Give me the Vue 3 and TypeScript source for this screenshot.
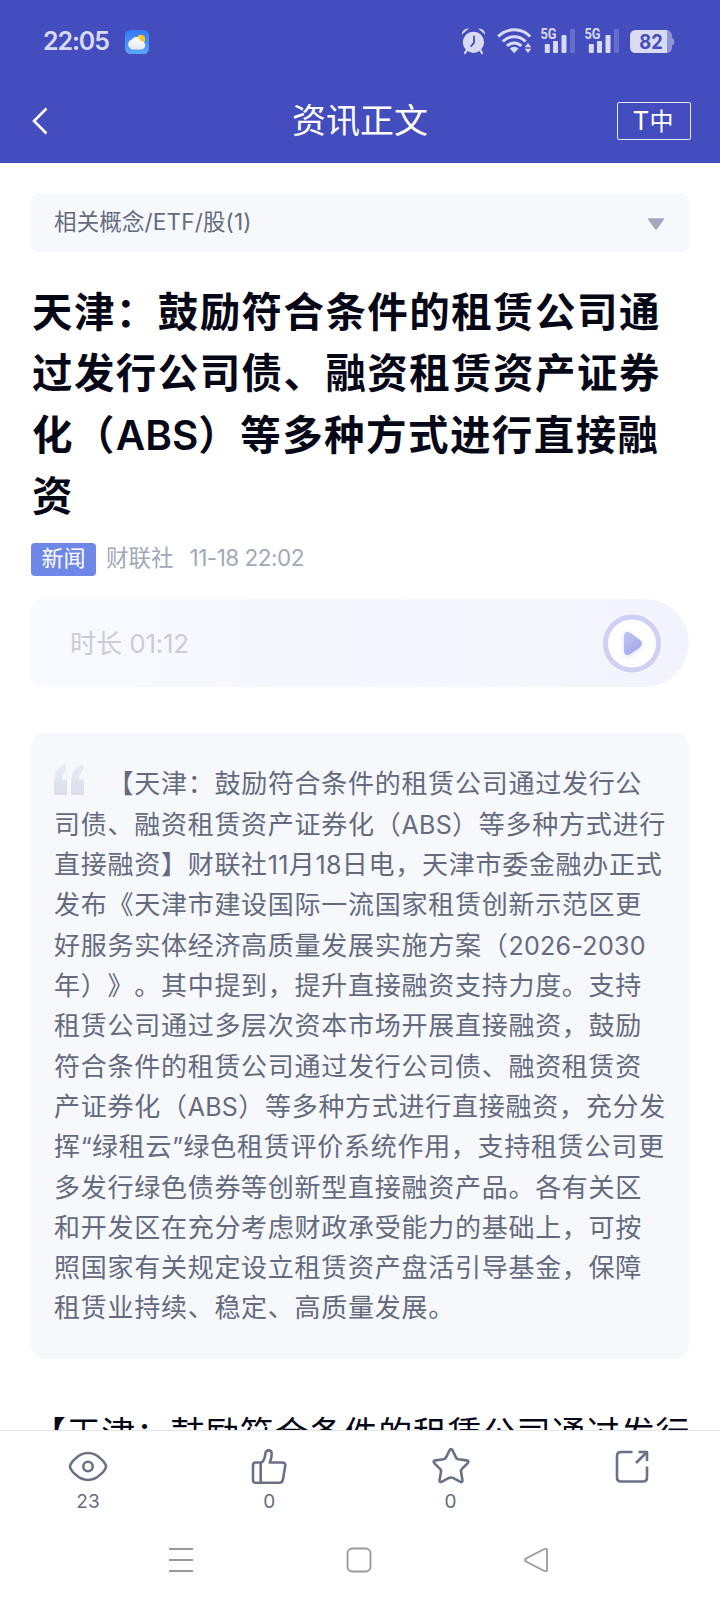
<script setup lang="ts">
interface Segment {
  text: string
  latin: boolean
}

const headline: string[] = [
  '天津：鼓励符合条件的租赁公司通',
  '过发行公司债、融资租赁资产证券',
  '化（ABS）等多种方式进行直接融',
  '资',
]

const summary: string[] = [
  '【天津：鼓励符合条件的租赁公司通过发行公',
  '司债、融资租赁资产证券化（ABS）等多种方式进行',
  '直接融资】财联社11月18日电，天津市委金融办正式',
  '发布《天津市建设国际一流国家租赁创新示范区更',
  '好服务实体经济高质量发展实施方案（2026-2030',
  '年）》。其中提到，提升直接融资支持力度。支持',
  '租赁公司通过多层次资本市场开展直接融资，鼓励',
  '符合条件的租赁公司通过发行公司债、融资租赁资',
  '产证券化（ABS）等多种方式进行直接融资，充分发',
  '挥“绿租云”绿色租赁评价系统作用，支持租赁公司更',
  '多发行绿色债券等创新型直接融资产品。各有关区',
  '和开发区在充分考虑财政承受能力的基础上，可按',
  '照国家有关规定设立租赁资产盘活引导基金，保障',
  '租赁业持续、稳定、高质量发展。',
]

const body = '【天津：鼓励符合条件的租赁公司通过发行'

function segments(line: string): Segment[] {
  return line
    .split(/([A-Za-z0-9\-“”]+)/)
    .filter((t) => t.length > 0)
    .map((t) => ({ text: t, latin: /^[A-Za-z0-9\-“”]/.test(t) }))
}
</script>

<template>
  <div class="screen">
    <header class="top">
      <div class="status">
        <span class="clock">22:05</span>
        <svg class="weather" width="24" height="24" viewBox="0 0 24 24">
          <defs>
            <linearGradient id="sky" x1="0" y1="0" x2="0" y2="1">
              <stop offset="0" stop-color="#3478f3" />
              <stop offset="1" stop-color="#5ba6f8" />
            </linearGradient>
            <linearGradient id="cloud" x1="0" y1="0" x2="0" y2="1">
              <stop offset="0" stop-color="#fff" />
              <stop offset="1" stop-color="#e4e9f0" />
            </linearGradient>
          </defs>
          <rect width="24" height="24" rx="5.5" fill="url(#sky)" />
          <circle cx="15.8" cy="9.2" r="4.4" fill="#fcc62c" />
          <path d="M7.800 19.500a5 5 0 0 1-4.600-5.200c0-2.400 1.600-4.200 3.600-4.600C7.600 8 9 7 10.800 7c2.300 0 4.100 1.600 4.500 3.700 3 .1 4.900 1.900 4.900 4.500 0 2.500-1.900 4.300-4.400 4.300z" fill="url(#cloud)" />
        </svg>
        <div class="signals">
          <svg width="214" height="28" viewBox="0 0 214 28" fill="#d9dbf5">
            <!-- alarm clock -->
            <g>
              <circle cx="12.500" cy="15.300" r="10.600" />
              <path d="M.8 7.800a6 6 0 0 1 7-6.300zM24.200 7.800a6 6 0 0 0-7-6.300z" />
              <path d="M5.500 23.500l-1.500 2.500M19.500 23.500l1.500 2.500" stroke="#d9dbf5" stroke-width="2.200" stroke-linecap="round" />
              <path d="M13 9.500v6.300l-2.800 3.200" fill="none" stroke="#444dbe" stroke-width="1.800" stroke-linecap="round" />
            </g>
            <!-- wifi -->
            <g fill="none" stroke="#d9dbf5" stroke-width="3">
              <path d="M37.200 9.500a22.500 22.500 0 0 1 32 0" />
              <path d="M41.800 14.500a16 16 0 0 1 22.800 0" />
              <path d="M46 19a10 10 0 0 1 14.400 0" />
            </g>
            <path d="M53.200 26.200l-4.400-4.600a6.400 6.400 0 0 1 8.800 0z" />
            <path d="M67 16l3.400 4.200h-6.800zM67 26l3.400-4.200h-6.800z" />
            <!-- cell signals -->
            <g v-for="x in [79, 123]" :key="x">
              <rect :x="x + 4.800" y="17" width="5" height="9" rx="1" />
              <rect :x="x + 13" y="14" width="5" height="12" rx="1" />
              <rect :x="x + 21.500" y="8" width="5" height="18" rx="1" />
              <rect :x="x + 30" y="2" width="5" height="24" rx="1" opacity=".23" />
            </g>
            <!-- battery -->
            <path d="M206 3c3.500.8 5 3 5 6v11.500c0 3-1.500 5-5 5.500z" opacity=".5" />
            <path d="M211 11q2.300.5 2.300 3.800t-2.300 3.700z" opacity=".5" />
            <path d="M174.500 3H206v23h-31.500a5.500 5.500 0 0 1-5.500-5.500V8.500a5.500 5.500 0 0 1 5.500-5.500z" />
            <text x="79.500" y="11.700" class="net" textLength="16" lengthAdjust="spacingAndGlyphs">5G</text>
            <text x="123.500" y="11.700" class="net" textLength="16" lengthAdjust="spacingAndGlyphs">5G</text>
            <text x="178.300" y="22" class="level" textLength="23.500" lengthAdjust="spacingAndGlyphs">82</text>
          </svg>
        </div>
      </div>
      <nav class="bar">
        <svg class="back" width="18" height="30" viewBox="0 0 18 30" fill="none" stroke="#fff" stroke-width="2.600">
          <path d="M16.500 2.500L4 15 16.500 27.500" />
        </svg>
        <h2 class="page-name">资讯正文</h2>
        <button class="font-btn"><span class="t">T</span>中</button>
      </nav>
    </header>

    <main class="content">
      <section class="concept">
        <span class="concept-label">相关概念<i>/ETF/</i>股<i>(1)</i></span>
        <svg width="18" height="12" viewBox="0 0 18 12"><path d="M1.500.3h15q1 .2.500 1.200L9.800 11.200q-.8.8-1.600 0L1 1.500q-.5-1 .500-1.200z" fill="#a0a9be" /></svg>
      </section>

      <h1 class="headline">
        <div v-for="(line, i) in headline" :key="i">
          <span v-for="(s, j) in segments(line)" :key="j" :class="{ latin: s.latin }">{{ s.text }}</span>
        </div>
      </h1>

      <div class="meta">
        <span class="tag">新闻</span>
        <span class="source">财联社</span>
        <span class="date">11-18 22:02</span>
      </div>

      <section class="audio">
        <span class="duration">时长 <i>01:12</i></span>
        <svg width="60" height="60" viewBox="0 0 60 60">
          <defs>
            <linearGradient id="play" x1="0" y1="0" x2=".6" y2="1">
              <stop offset="0" stop-color="#c0c9f6" />
              <stop offset="1" stop-color="#a4a6e9" />
            </linearGradient>
            <filter id="glow" x="-50%" y="-50%" width="200%" height="200%">
              <feDropShadow dx="0" dy="2" stdDeviation="2.500" flood-color="#a4a6e9" flood-opacity=".35" />
            </filter>
          </defs>
          <circle cx="30" cy="30.500" r="26.500" fill="#fff" stroke="#cfd1f3" stroke-width="5" />
          <path d="M22 23c0-4 3-5.500 6.300-3.200l9 6.500c3.400 2.400 3.400 6 0 8.400l-9 6.300c-3.300 2.300-6.300.8-6.300-3.200z" fill="url(#play)" filter="url(#glow)" />
        </svg>
      </section>

      <section class="summary">
        <svg class="quote" width="31" height="32" viewBox="0 0 31 32">
          <defs>
            <linearGradient id="mark" x1="0" y1="0" x2="0" y2="1">
              <stop offset="0" stop-color="#e9ecf4" />
              <stop offset="1" stop-color="#d9deea" />
            </linearGradient>
          </defs>
          <path d="M12 0v6.500Q8 9 7.800 15.500H13V31H0V16Q.5 3.500 12 0zM29 0v6.500Q25 9 24.800 15.500H30V31H17V16Q17.500 3.500 29 0z" fill="url(#mark)" />
        </svg>
        <div v-for="(line, i) in summary" :key="i" class="line" :class="{ first: i === 0 }">
          <span v-for="(s, j) in segments(line)" :key="j" :class="{ latin: s.latin }">{{ s.text }}</span>
        </div>
      </section>

      <p class="body">{{ body }}</p>
    </main>

    <footer class="actions">
      <div class="action">
        <svg width="40" height="40" viewBox="0 0 40 40">
          <path d="M2 20.500C2 18 9.500 7 20 7s18 11 18 13.500S30.500 34 20 34 2 23 2 20.500z" />
          <circle cx="20" cy="20.500" r="4.700" />
        </svg>
        <span>23</span>
      </div>
      <div class="action">
        <svg width="40" height="40" viewBox="0 0 40 40">
          <path d="M5 16.500h7.500q2-1 3-4.500l1-4.800c1-3.800 6-3.800 6.200.5.100 3-.5 5.300-1.900 8.800H33q3.800 0 3.200 3.600l-2.200 13.200q-.6 3.500-3.500 3.500H6.500Q4 36.800 4 34V19.500q0-3 2.500-3M11.700 17v19.800" />
        </svg>
        <span>0</span>
      </div>
      <div class="action">
        <svg width="40" height="40" viewBox="0 0 40 40">
          <path d="M18.400 4.600q1.600-3 3.200 0l3.500 7 .9 1.200 1.500.4 8 1.200q3.200.6 1 2.900l-5.800 5.900-.7 1.200v1.400l1.400 8.100q.4 3-2.400 1.700l-7-3.700q-2-.8-4 0l-7 3.700q-2.800 1.300-2.400-1.700l1.400-8.100v-1.400l-.7-1.200-5.800-5.900q-2.200-2.300 1-2.900l8-1.200 1.500-.4.900-1.200z" />
        </svg>
        <span>0</span>
      </div>
      <div class="action">
        <svg width="40" height="40" viewBox="0 0 40 40">
          <path d="M20.500 6H9Q5 6 5 10v21.500q0 4 4 4h22q4 0 4-4V20.500" />
          <path d="M26.500 6H35v9" />
          <path d="M35 6L24 17" />
        </svg>
        <span></span>
      </div>
    </footer>

    <div class="sysnav">
      <svg width="26" height="26" viewBox="0 0 26 26"><path d="M1 2h24M1 13h24M1 24h24" /></svg>
      <svg width="26" height="26" viewBox="0 0 26 26"><rect x="1.500" y="1.500" width="23" height="23" rx="5" /></svg>
      <svg width="26" height="26" viewBox="0 0 26 26"><path d="M20.300 2L2 11.500Q0 13 2 14.500L20.300 24Q23 24.800 23 22.500v-19Q23 1.200 20.300 2z" /></svg>
    </div>
  </div>
</template>

<style>
body {
  background: #fff;
}
</style>

<style scoped>
.screen {
  width: 720px;
  height: 1604px;
  overflow: hidden;
  display: flex;
  flex-direction: column;
  background: #fff;
  font-family: Inter, 'Noto Sans CJK SC', sans-serif;
  color: #070817;
  white-space: nowrap;
  text-spacing-trim: space-all;
}
i {
  font-style: normal;
}
.top {
  height: 163px;
  flex: none;
  background: #444dbe;
}
.status {
  height: 82px;
  display: flex;
  align-items: center;
  padding: 0 45px 0 43px;
  box-sizing: border-box;
  color: #d9dbf6;
}
.clock {
  width: 82px;
  font-size: 25px;
  font-weight: 600;
  line-height: 30px;
  letter-spacing: -1.100px;
}
.weather {
  display: block;
  margin-top: 2px;
}
.signals {
  margin-left: auto;
  height: 28px;
}
.signals svg {
  display: block;
}
.net {
  font: 700 14px Roboto, sans-serif;
}
.level {
  font: 700 20px Inter, sans-serif;
  fill: #444dbe;
}
.bar {
  height: 78px;
  display: grid;
  grid-template-columns: 110px 1fr 110px;
  align-items: center;
  color: #fff;
}
.back {
  margin-left: 30px;
}
.page-name {
  margin: 0;
  text-align: center;
  font-size: 34px;
  font-weight: 400;
  line-height: 50px;
}
.font-btn {
  width: 74px;
  height: 38px;
  margin: 0 0 0 7px;
  padding: 0 2px 0 0;
  border: 1px solid #e8e9f8;
  border-radius: 2px;
  background: none;
  color: #fff;
  font: 24px/34px Inter, 'Noto Sans CJK SC', sans-serif;
}
.font-btn .t {
  font-size: 26px;
}
.content {
  flex: 1;
  min-height: 0;
  overflow: hidden;
  padding: 31px 31px 0;
}
.concept {
  height: 58px;
  box-sizing: border-box;
  padding: 0 24px 3px 23px;
  border-radius: 7px;
  background: #f6f8fc;
  display: flex;
  align-items: center;
  justify-content: space-between;
}
.concept-label {
  font-size: 22.500px;
  line-height: 34px;
  letter-spacing: 0.150px;
  color: #656b7e;
}
.concept svg {
  margin-top: 4px;
}
.headline {
  margin: 30px 0 0 1px;
  font-size: 40.500px;
  line-height: 61.400px;
  font-weight: 700;
  letter-spacing: 1.420px;
}
.headline .latin {
  font-weight: 600;
  letter-spacing: 0;
}
.meta {
  display: flex;
  align-items: center;
  height: 33px;
  margin-top: 15.400px;
  font-size: 22.500px;
  color: #a0a8ba;
}
.tag {
  width: 65px;
  height: 33px;
  line-height: 30px;
  border-radius: 4px;
  background: #6f87e7;
  color: #fff;
  text-align: center;
  font-size: 22px;
}
.source {
  margin-left: 10px;
  line-height: 30px;
  margin-bottom: 3px;
}
.date {
  margin: 0 0 3px 16px;
  line-height: 30px;
  letter-spacing: -0.500px;
}
.audio {
  height: 88px;
  margin-top: 23px;
  box-sizing: border-box;
  padding: 0 27px 0 39px;
  border-radius: 12px 44px 44px 12px;
  background: linear-gradient(90deg, #f9faff 0%, #f6f6fe 38%, #f4f8fe 62%, #f6f6fd 76%, #f3f3fe 100%);
  display: flex;
  align-items: center;
  justify-content: space-between;
}
.duration {
  margin-bottom: 4px;
  font-size: 26px;
  color: #c9cdd9;
}
.duration i {
  letter-spacing: -0.250px;
}
.summary {
  height: 625.600px;
  margin-top: 46px;
  box-sizing: border-box;
  padding: 31.400px 0 0 23px;
  border-radius: 14px;
  background: #f6f8fc;
  position: relative;
  font-size: 26px;
  line-height: 40.320px;
  letter-spacing: 0.730px;
  color: #656b7e;
}
.quote {
  position: absolute;
  left: 23px;
  top: 31px;
}
.line {
  height: 40.320px;
}
.line.first {
  padding-left: 53.500px;
}
.line .latin {
  font-size: 25px;
  letter-spacing: 0.300px;
}
.body {
  margin: 48.400px 0 0 1px;
  font-size: 34px;
  line-height: 54px;
  letter-spacing: 0.630px;
}
.actions {
  height: 92px;
  flex: none;
  border-top: 1px solid #e3e5ea;
  box-sizing: border-box;
  display: flex;
  gap: 141.300px;
  padding-left: 68px;
}
.action {
  width: 40px;
  padding-top: 14.500px;
  display: flex;
  flex-direction: column;
  align-items: center;
  color: #656b7e;
  font-size: 19px;
  line-height: 24px;
}
.action svg {
  display: block;
  flex: none;
  fill: none;
  stroke: #6b7184;
  stroke-width: 2.600px;
  stroke-linejoin: round;
}
.action span {
  margin-top: 4.500px;
}
.sysnav {
  height: 82px;
  flex: none;
  display: flex;
  padding: 25px 0 0 168px;
  gap: 152px;
  box-sizing: border-box;
}
.sysnav svg {
  fill: none;
  stroke: #999;
  stroke-width: 1.800px;
}
</style>
